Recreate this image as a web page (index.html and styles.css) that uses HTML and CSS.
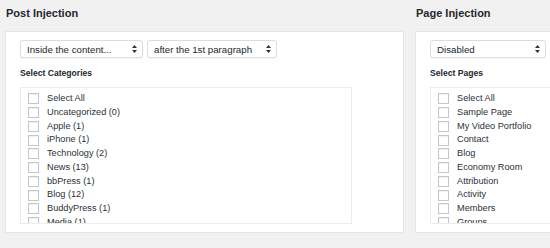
FILE: index.html
```html
<!DOCTYPE html>
<html>
<head>
<meta charset="utf-8">
<link rel="stylesheet" href="styles.css">
</head>
<body>
<div class="columns">
  <section class="col">
    <h2 class="title">Post Injection</h2>
    <div class="card">
      <div class="selects">
        <div class="select s1"><span>Inside the content...</span><svg class="arrow" width="5" height="8" viewBox="0 0 5 8"><path d="M2.5 0 L5 3 L0 3 Z M2.5 8 L5 5 L0 5 Z" fill="#333"/></svg></div>
        <div class="select s2"><span>after the 1st paragraph</span><svg class="arrow" width="5" height="8" viewBox="0 0 5 8"><path d="M2.5 0 L5 3 L0 3 Z M2.5 8 L5 5 L0 5 Z" fill="#333"/></svg></div>
      </div>
      <div class="label">Select Categories</div>
      <div class="list">
        <div class="row"><span class="cb"></span>Select All</div>
        <div class="row"><span class="cb"></span>Uncategorized (0)</div>
        <div class="row"><span class="cb"></span>Apple (1)</div>
        <div class="row"><span class="cb"></span>iPhone (1)</div>
        <div class="row"><span class="cb"></span>Technology (2)</div>
        <div class="row"><span class="cb"></span>News (13)</div>
        <div class="row"><span class="cb"></span>bbPress (1)</div>
        <div class="row"><span class="cb"></span>Blog (12)</div>
        <div class="row"><span class="cb"></span>BuddyPress (1)</div>
        <div class="row"><span class="cb"></span>Media (1)</div>
      </div>
    </div>
  </section>
  <section class="col">
    <h2 class="title">Page Injection</h2>
    <div class="card">
      <div class="selects">
        <div class="select s3"><span>Disabled</span><svg class="arrow" width="5" height="8" viewBox="0 0 5 8"><path d="M2.5 0 L5 3 L0 3 Z M2.5 8 L5 5 L0 5 Z" fill="#333"/></svg></div>
      </div>
      <div class="label">Select Pages</div>
      <div class="list wide">
        <div class="row"><span class="cb"></span>Select All</div>
        <div class="row"><span class="cb"></span>Sample Page</div>
        <div class="row"><span class="cb"></span>My Video Portfolio</div>
        <div class="row"><span class="cb"></span>Contact</div>
        <div class="row"><span class="cb"></span>Blog</div>
        <div class="row"><span class="cb"></span>Economy Room</div>
        <div class="row"><span class="cb"></span>Attribution</div>
        <div class="row"><span class="cb"></span>Activity</div>
        <div class="row"><span class="cb"></span>Members</div>
        <div class="row"><span class="cb"></span>Groups</div>
      </div>
    </div>
  </section>
</div>
</body>
</html>
```
FILE: styles.css
```css
html, body {
  margin: 0;
  padding: 0;
  background: #f1f1f1;
  overflow: hidden;
}
body {
  width: 550px;
  height: 248px;
  font-family: "Liberation Sans", Arial, sans-serif;
  color: #23282d;
}
.columns {
  display: grid;
  grid-template-columns: 399px 399px;
  column-gap: 11px;
  padding: 0 5px;
}
.title {
  margin: 7px 0 11px 1px;
  font-size: 11px;
  line-height: 13px;
  font-weight: bold;
  color: #23282d;
}
.card {
  background: #fff;
  border: 1px solid #e5e5e5;
  padding: 8px 14px 7px 14px;
  height: 185px;
  box-sizing: content-box;
}
.selects {
  display: flex;
  gap: 4px;
}
.select {
  height: 18px;
  box-sizing: border-box;
  border: 1px solid #dcdcdc;
  border-radius: 3px;
  background: #fff;
  display: flex;
  align-items: center;
  justify-content: space-between;
  padding: 0 5px 0 6px;
  font-size: 9.7px;
  color: #23282d;
  box-shadow: 0 1px 1px rgba(0,0,0,0.04);
}
.s1 { width: 123px; }
.s2 { width: 130px; }
.s3 { width: 116px; }
.arrow { flex: none; }
.label {
  margin-top: 10px;
  font-size: 8.6px;
  line-height: 11px;
  font-weight: bold;
  color: #23282d;
}
.list {
  margin-top: 8px;
  width: 332px;
  height: 137px;
  box-sizing: border-box;
  border: 1px solid #ececec;
  padding: 4px 7px 0 7px;
  overflow: hidden;
}
.list.wide {
  width: 400px;
}
.row {
  display: flex;
  align-items: center;
  height: 13.75px;
  font-size: 9.2px;
  line-height: 13.75px;
  color: #2c3136;
  white-space: nowrap;
}
.cb {
  flex: none;
  width: 11px;
  height: 11px;
  box-sizing: border-box;
  border: 1px solid #c4c7ca;
  background: #fff;
  box-shadow: inset 0 1px 1px rgba(0,0,0,0.06);
  margin-right: 8px;
}
```
